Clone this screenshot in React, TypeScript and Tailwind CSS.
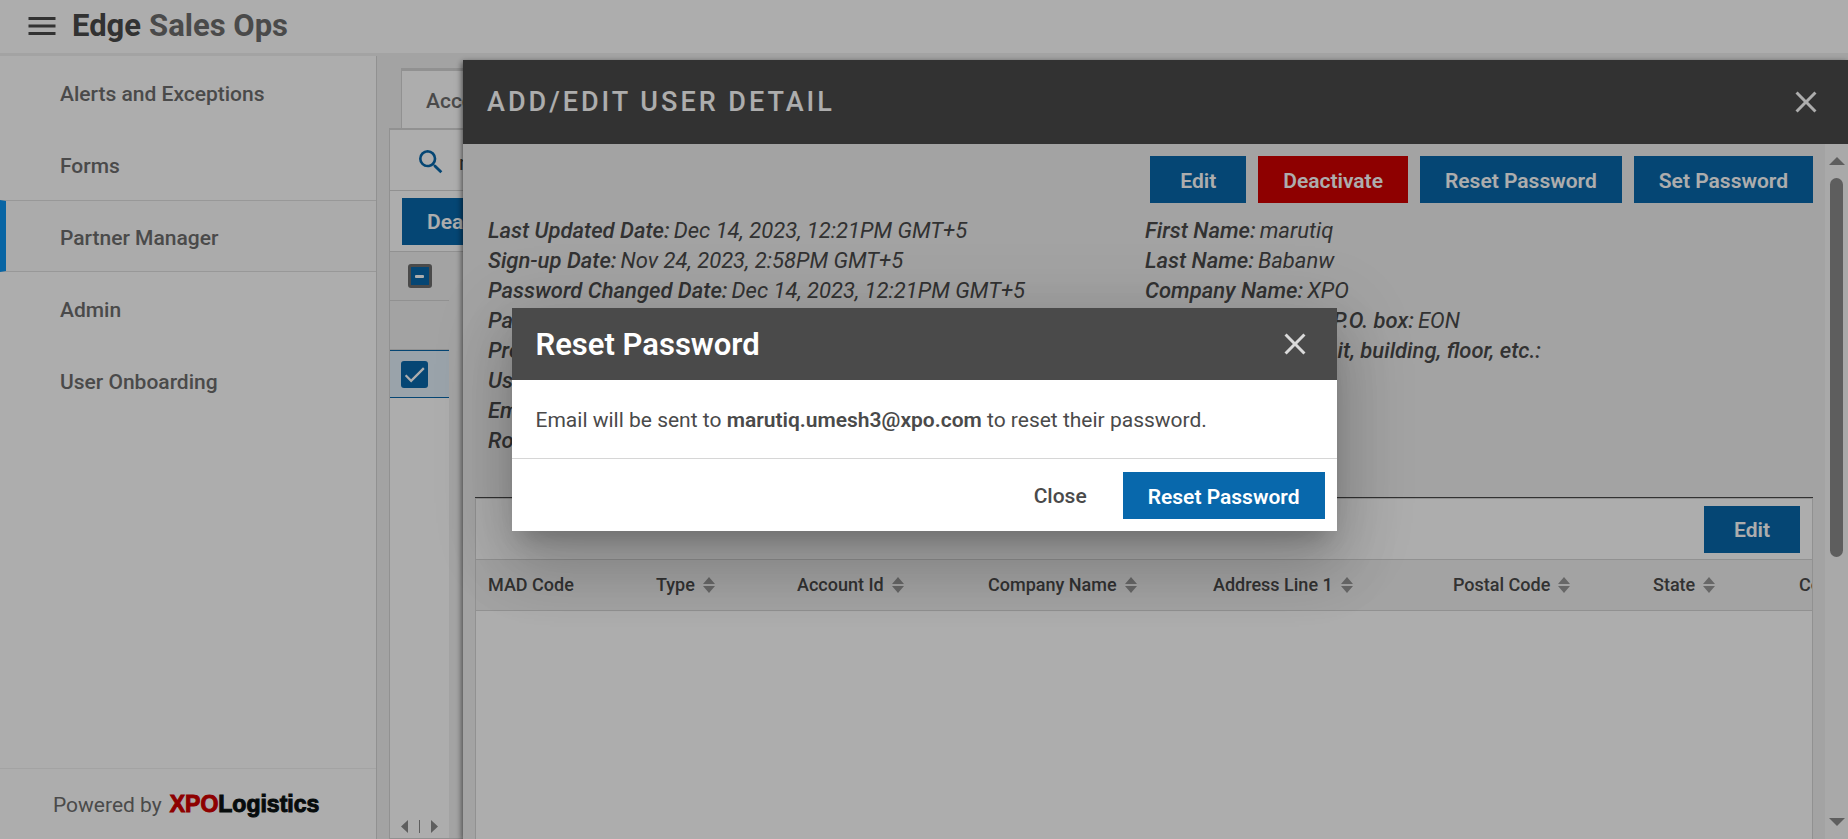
import type { ReactNode } from "react";
import { MdCheck, MdClose, MdMenu, MdSearch } from "react-icons/md";

const navItems = ["Alerts and Exceptions", "Forms", "Partner Manager", "Admin", "User Onboarding"];

const accountFields = [
  ["Last Updated Date:", "Dec 14, 2023, 12:21PM GMT+5"],
  ["Sign-up Date:", "Nov 24, 2023, 2:58PM GMT+5"],
  ["Password Changed Date:", "Dec 14, 2023, 12:21PM GMT+5"],
  ["Partner Type:", ""],
  ["Profile Status:", ""],
  ["User Name:", ""],
  ["Email:", ""],
  ["Role:", ""],
];

const personFields = [
  ["First Name:", "marutiq"],
  ["Last Name:", "Babanw"],
  ["Company Name:", "XPO"],
  ["Street Address and P.O. box:", "EON"],
  ["Apartment, suite, unit, building, floor, etc.:", ""],
];

const columns = [
  { label: "MAD Code", width: "w-[168px]", sortable: false },
  { label: "Type", width: "w-[141px]", sortable: true },
  { label: "Account Id", width: "w-[191px]", sortable: true },
  { label: "Company Name", width: "w-[225px]", sortable: true },
  { label: "Address Line 1", width: "w-[240px]", sortable: true },
  { label: "Postal Code", width: "w-[200px]", sortable: true },
  { label: "State", width: "w-[146px]", sortable: true },
  { label: "Country", width: "w-[160px]", sortable: true },
];

function Button({ children, color = "bg-[#0868ac]", pad = "px-[25px]" }: { children: ReactNode; color?: string; pad?: string }) {
  return (
    <button type="button" className={`h-[47px] shrink-0 pt-0.5 text-[21px] leading-8 font-semibold whitespace-nowrap text-white ${color} ${pad}`}>
      {children}
    </button>
  );
}

function SortIcon() {
  return (
    <svg viewBox="0 0 12 16" className="h-4 w-3 fill-[#999999]" aria-hidden="true">
      <path d="M6 0 12 7H0zM6 16 0 9h12z" />
    </svg>
  );
}

function Fields({ items }: { items: string[][] }) {
  return (
    <dl className="text-[22px] leading-[30px] text-[#4a4a4a] italic">
      {items.map(([label, value]) => (
        <div key={label} className="flex gap-1 whitespace-nowrap">
          <dt className="font-medium">{label}</dt>
          <dd>{value}</dd>
        </div>
      ))}
    </dl>
  );
}

function Sidebar() {
  return (
    <aside className="flex w-[377px] shrink-0 flex-col border-r border-[#d6d6d6] bg-white">
      <nav className="flex-1">
        {navItems.map((item) => (
          <a
            key={item}
            href="#"
            className={
              item === "Partner Manager"
                ? "flex h-[72px] items-center border-y border-l-6 border-y-[#e0e0e0] border-l-[#0c95f2] bg-[#fcfcfc] pt-[3px] pl-[54px] text-[21px] leading-8 font-medium text-[#6e6e6e]"
                : "flex h-[72px] items-center pt-[3px] pl-[60px] text-[21px] leading-8 font-medium text-[#6e6e6e]"
            }
          >
            {item}
          </a>
        ))}
      </nav>
      <div className="flex h-[71px] items-center gap-2 border-t border-[#f0f0f0] pl-[53px]">
        <span className="pt-0.5 text-[21px] leading-8 text-[#6e6e6e]">Powered by</span>
        <span className="font-['Liberation_Sans',sans-serif] text-[23px] leading-none font-bold">
          <span className="text-[#d10000] [-webkit-text-stroke:1px_#d10000]">XPO</span>
          <span className="text-[#0b1212] [-webkit-text-stroke:1px_#0b1212]">Logistics</span>
        </span>
      </div>
    </aside>
  );
}

function AccountsPanel() {
  return (
    <main className="flex min-w-0 flex-1 flex-col bg-[#f1f1f1] pt-3 pl-3">
      <div className="ml-3 flex h-[60px] w-[180px] shrink-0 items-center border-t-3 border-l border-[#d6d6d6] bg-white pt-0.5 pl-6 text-[21px] leading-8 font-medium text-[#6e6e6e]">
        Accounts
      </div>
      <section className="flex flex-1 flex-col border-t-2 border-b border-l border-[#d6d6d6]">
        <label className="flex h-[61px] shrink-0 items-center gap-3 border-b border-[#d6d6d6] bg-white pt-1 pl-[25px]">
          <MdSearch className="size-8 shrink-0 text-[#0868ac]" />
          <input aria-label="Search users" defaultValue="marutiq" className="w-60 pt-0.5 text-[21px] leading-8 text-[#4a4a4a] outline-none" />
        </label>
        <div className="flex h-[61px] shrink-0 items-center border-b border-[#d6d6d6] bg-white pl-3">
          <Button>Deactivate</Button>
        </div>
        <div className="flex w-[59px] flex-1 flex-col bg-white">
          <div className="flex h-[49px] items-center border-b border-[#d6d6d6] bg-[#f1f1f1] pl-[18px]">
            <div className="relative flex size-6">
              <input type="checkbox" aria-label="Select all" className="size-6 appearance-none rounded-[3px] border-3 border-[#6d6d6d] bg-[#0868ac]" />
              <span className="pointer-events-none absolute top-[11px] left-[7px] h-[3px] w-[9px] rounded-[1px] bg-white" />
            </div>
          </div>
          <div className="h-[49px] border-b border-[#d6d6d6] bg-[#f1f1f1]" />
          <div className="flex h-12 items-center border-y border-[#0868ac] bg-[#e3f0fb] pl-[11px]">
            <div className="relative flex size-[27px]">
              <input type="checkbox" defaultChecked aria-label="Select user" className="size-[27px] appearance-none rounded-[3px] bg-[#0868ac]" />
              <MdCheck className="pointer-events-none absolute inset-0 size-[27px] text-white" />
            </div>
          </div>
          <div className="flex flex-1 items-end gap-[11px] pb-[5px] pl-[11px]">
            <svg viewBox="0 0 7 13" className="h-[13px] w-[7px] fill-[#8b8b8b]" aria-hidden="true">
              <path d="M7 0v13L0 6.500z" />
            </svg>
            <span className="h-[13px] w-px bg-[#8b8b8b]" />
            <svg viewBox="0 0 7 13" className="h-[13px] w-[7px] fill-[#8b8b8b]" aria-hidden="true">
              <path d="M0 0v13l7-6.500z" />
            </svg>
          </div>
        </div>
      </section>
    </main>
  );
}

function UserDrawer() {
  return (
    <section
      aria-label="Add/Edit user detail"
      className="absolute top-[60px] right-0 bottom-0 left-[463px] flex flex-col bg-[#f1f1f1] shadow-[-1px_2px_6px_rgba(0,0,0,0.6)]"
    >
      <header className="flex h-[84px] shrink-0 items-center justify-between bg-[#4a4a4a] pr-6 pl-6 text-white">
        <h2 className="text-[27px] leading-none font-medium tracking-[3px]">ADD/EDIT USER DETAIL</h2>
        <button type="button" aria-label="Close panel">
          <MdClose className="size-9" />
        </button>
      </header>
      <div className="flex min-h-0 flex-1">
        <div className="flex min-w-0 flex-1 flex-col px-3 pt-3">
          <div className="flex justify-end gap-3">
            <Button pad="px-[30px]">Edit</Button>
            <Button color="bg-[#d10000]">Deactivate</Button>
            <Button>Reset Password</Button>
            <Button>Set Password</Button>
          </div>
          <div className="grid grid-cols-2 pt-[13px] pr-[11px] pb-[41px] pl-[13px]">
            <Fields items={accountFields} />
            <Fields items={personFields} />
          </div>
          <div className="flex min-h-0 flex-1 flex-col border-t border-[#4a4a4a]">
            <div className="flex min-h-0 flex-1 flex-col overflow-hidden border-x border-t border-[#d6d6d6] bg-white">
              <div className="flex h-[61px] shrink-0 items-center justify-end border-b border-[#d6d6d6] pr-3">
                <Button pad="px-[30px]">Edit</Button>
              </div>
              <table className="w-[1471px] table-fixed border-collapse">
                <thead>
                  <tr className="h-[50px] border-b border-[#d6d6d6] bg-[#f1f1f1] text-left text-lg text-[#4a4a4a]">
                    {columns.map((column) => (
                      <th key={column.label} scope="col" className={`pl-3 font-medium ${column.width}`}>
                        <span className="flex items-center gap-2 whitespace-nowrap">
                          {column.label}
                          {column.sortable && <SortIcon />}
                        </span>
                      </th>
                    ))}
                  </tr>
                </thead>
              </table>
            </div>
          </div>
        </div>
        <div className="flex w-[23px] shrink-0 flex-col items-center bg-[#fafafa] pt-[13px] pb-[13px]">
          <svg viewBox="0 0 16 8" className="h-2 w-4 fill-[#8b8b8b]" aria-hidden="true">
            <path d="M8 0l8 8H0z" />
          </svg>
          <div className="mt-[13px] h-[379px] w-[13px] rounded-full bg-[#8b8b8b]" />
          <svg viewBox="0 0 16 8" className="mt-auto h-2 w-4 fill-[#8b8b8b]" aria-hidden="true">
            <path d="M8 8 0 0h16z" />
          </svg>
        </div>
      </div>
    </section>
  );
}

function ResetPasswordDialog() {
  return (
    <div className="absolute inset-0 flex items-center justify-center bg-black/32">
      <div
        role="dialog"
        aria-modal="true"
        aria-labelledby="reset-title"
        className="w-[825px] bg-white shadow-[0_16px_22px_-10px_rgba(0,0,0,0.2),0_36px_57px_4px_rgba(0,0,0,0.14),0_14px_69px_12px_rgba(0,0,0,0.12)]"
      >
        <header className="flex h-[72px] items-center justify-between bg-[#4a4a4a] pr-6 pl-6">
          <h2 id="reset-title" className="text-[31px] leading-none font-semibold text-white">
            Reset Password
          </h2>
          <button type="button" aria-label="Close dialog">
            <MdClose className="size-9 text-[#dadada]" />
          </button>
        </header>
        <p className="flex h-[78px] items-center px-6 pt-0.5 text-[21px] leading-8 text-[#4a4a4a]">
          <span>
            Email will be sent to <span className="font-semibold">marutiq.umesh3@xpo.com</span> to reset their password.
          </span>
        </p>
        <footer className="flex items-center justify-end gap-3 border-t border-[#d6d6d6] px-3 pt-[13px] pb-3">
          <button type="button" className="h-[47px] px-6 text-[21px] leading-8 font-medium text-[#4a4a4a]">
            Close
          </button>
          <Button>Reset Password</Button>
        </footer>
      </div>
    </div>
  );
}

export default function App() {
  return (
    <div className="relative flex h-screen flex-col overflow-hidden bg-white font-[Roboto,sans-serif]">
      <header className="flex h-14 shrink-0 items-center gap-3 border-b-3 border-[#f1f1f1] bg-white pb-0.5 pl-6">
        <button type="button" aria-label="Open menu">
          <MdMenu className="size-9 text-[#4a4a4a]" />
        </button>
        <h1 className="flex gap-2 text-[31px] leading-none font-bold text-[#6e6e6e]">
          <span className="text-[#4a4a4a]">Edge</span>
          <span>Sales Ops</span>
        </h1>
      </header>
      <div className="flex min-h-0 flex-1">
        <Sidebar />
        <AccountsPanel />
      </div>
      <UserDrawer />
      <ResetPasswordDialog />
    </div>
  );
}
